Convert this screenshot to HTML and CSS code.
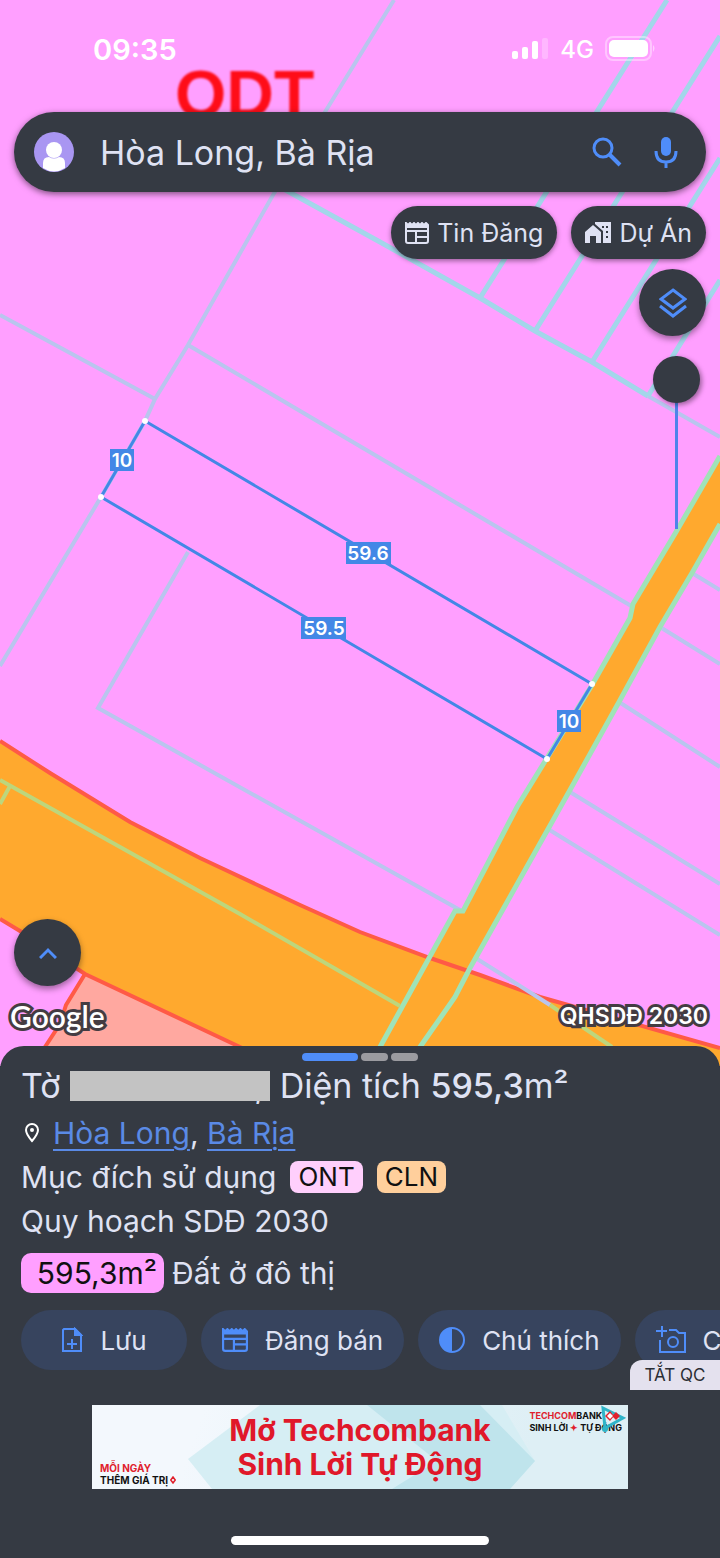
FILE: index.html
```html
<!DOCTYPE html>
<html lang="vi">
<head>
    <meta charset="UTF-8">
    <meta name="viewport" content="width=device-width, initial-scale=1.0">
    <title>Bản đồ quy hoạch</title>
    <link rel="stylesheet" href="styles.css">
</head>
<body>
    <main class="map">
        <svg class="map-canvas" viewBox="0 0 720 1070" preserveAspectRatio="xMidYMin slice" role="img" aria-label="Bản đồ thửa đất">
            <text class="zone-label" x="175" y="117">ODT</text>

            <!-- đường giao thông -->
            <g class="road">
                <path d="M0 741L50 773L130 822L200 858L300 905L360 932L430 958L480 975L540 997L720 1048V1070H290L240 1047L85 974L20 931L0 919Z"/>
                <path d="M720 456L676 532L633 604L630 618L592 685L547 758L517 807L463 911L455 911L380 1047V1070H408L470 968L570 790L660 627L720 524Z"/>
            </g>
            <path class="salmon" d="M85 975L66 1005L60 1024L45 1047V1070H290L240 1047Z"/>
            <g class="border">
                <path d="M0 741L50 773L130 822L200 858L300 905L360 932L430 958L480 975L540 997L720 1048"/>
                <path d="M0 919L20 931L85 974L240 1047L290 1070"/>
                <path d="M85 974L66 1005L60 1024L45 1047"/>
            </g>

            <!-- ranh thửa -->
            <g class="parcel">
                <path d="M394 0L325 112L273 195L188 345L155 399L145 421L101 497L0 666"/>
                <path d="M0 315L155 399"/>
                <path d="M188 345L633 607"/>
                <path d="M188 552L98 708L460 910"/>
                <path d="M648 396L720 437"/>
                <path d="M692 573L720 590M660 627L720 664M619 702L720 767M570 792L720 884M548 829L720 935M474 957L550 1005"/>
            </g>
            <g class="parcel teal">
                <path d="M280 187L380 242L480 298L535 331L592 362L648 396"/>
                <path d="M667 0L480 298M720 36L535 331M720 158L592 362M720 280L648 396"/>
            </g>
            <g class="parcel green">
                <path d="M720 456L676 532L633 604L630 618L592 685L547 758L517 807L463 911L455 911L380 1047L370 1066"/>
                <path d="M720 524L692 573L660 627L619 702L570 790L470 968L455 997L420 1047L408 1066"/>
            </g>
            <g class="parcel lime">
                <path d="M0 780L240 914L400 1006M10 786L0 804M550 1005L612 1047"/>
            </g>

            <!-- thửa đang chọn -->
            <path class="selected" d="M145 421L592 684L547 759L101 497Z"/>
            <g class="nodes">
                <circle cx="145" cy="421" r="3"/>
                <circle cx="592" cy="684" r="3"/>
                <circle cx="547" cy="759" r="3"/>
                <circle cx="101" cy="497" r="3"/>
            </g>
            <g class="measure">
                <rect x="110" y="449" width="24" height="22"/>
                <text x="122" y="467">10</text>
                <rect x="346" y="542" width="45" height="22"/>
                <text x="368" y="560">59.6</text>
                <rect x="301" y="617" width="45" height="22"/>
                <text x="324" y="635">59.5</text>
                <rect x="557" y="710" width="24" height="22"/>
                <text x="569" y="728">10</text>
            </g>
        </svg>

        <header class="status-bar">
            <time>09:35</time>
            <div class="status-icons">
                <svg width="38" height="22" viewBox="0 0 38 22" fill="#fff">
                    <rect x="1" y="13" width="6" height="8" rx="2"/>
                    <rect x="11" y="9" width="6" height="12" rx="2"/>
                    <rect x="21" y="3" width="6" height="18" rx="2"/>
                    <rect x="31" y="0" width="6" height="21" rx="2" opacity=".25"/>
                </svg>
                <span>4G</span>
                <svg width="52" height="26" viewBox="0 0 52 26" fill="#fff">
                    <rect x="1" y="1" width="45" height="23" rx="7" fill="none" stroke="#fff" stroke-width="2" opacity=".4"/>
                    <rect x="4" y="4" width="39" height="17" rx="5"/>
                    <path d="M48 9q3 3 0 7z" opacity=".5"/>
                </svg>
            </div>
        </header>

        <form class="search">
            <svg class="avatar" viewBox="0 0 40 40">
                <circle cx="20" cy="20" r="20" fill="#a996f2"/>
                <path d="M9 36V31Q9 25 15 25Q20 28 25 25Q31 25 31 31V36Q20 43 9 36Z" fill="#fff"/>
                <circle cx="20" cy="18" r="8" fill="#fff"/>
            </svg>
            <input type="text" value="Hòa Long, Bà Rịa" aria-label="Tìm kiếm">
            <button type="button" aria-label="Tìm">
                <svg width="30" height="30" viewBox="0 0 30 30" fill="none" stroke="#4f8df9">
                    <circle cx="11" cy="11" r="9" stroke-width="3"/>
                    <path d="M17 17L28 28" stroke-width="4"/>
                </svg>
            </button>
            <button type="button" aria-label="Giọng nói">
                <svg width="24" height="33" viewBox="0 0 24 33" fill="none" stroke="#4f8df9" stroke-width="3">
                    <rect x="7" y="1" width="10" height="19" rx="5" fill="#4f8df9" stroke="none"/>
                    <path d="M2 15Q2 26 12 26Q22 26 22 15M12 26V32"/>
                </svg>
            </button>
        </form>

        <nav class="filters">
            <button type="button">
                <svg width="24" height="22" viewBox="0 0 24 22" fill="none" stroke="#dfe2f3" stroke-width="2">
                    <path d="M1 1L3 3L5 1L7 3L9 1L11 3L13 1L15 3L17 1L19 3L21 1L23 3V19Q23 21 21 21H3Q1 21 1 19Z"/>
                    <path d="M1 5H23M1 9H23M11 10V21M11 15H23M1 3H23"/>
                </svg>
                Tin Đăng
            </button>
            <button type="button">
                <svg width="26" height="22" viewBox="0 0 26 22" fill="#dfe2f3">
                    <path d="M0 10L8 3L16 10V21H11V14H5V21H0Z"/>
                    <path fill-rule="evenodd" d="M10 0H26V21H18V9L10 2ZM17 4V6H19V4ZM21 4V6H23V4ZM21 9V11H23V9ZM21 14V16H23V14Z"/>
                </svg>
                Dự Án
            </button>
        </nav>

        <div class="tools">
            <button class="round" type="button" aria-label="Lớp bản đồ">
                <svg width="28" height="30" viewBox="0 0 28 30" fill="none" stroke="#4f8df9" stroke-width="3">
                    <path d="M14 2L26 11L14 20L2 11Z"/>
                    <path d="M1 18L14 28L27 18"/>
                </svg>
            </button>
            <input class="opacity" type="range" min="0" max="100" value="0" aria-label="Độ mờ lớp quy hoạch">
        </div>

        <div class="map-bottom">
            <button class="round" type="button" aria-label="Mở rộng">
                <svg width="18" height="12" viewBox="0 0 18 12" fill="none" stroke="#4f8df9" stroke-width="3">
                    <path d="M1 11L9 3L17 11"/>
                </svg>
            </button>
            <div class="credits">
                <span class="google">Google</span>
                <span class="plan">QHSDĐ 2030</span>
            </div>
        </div>
    </main>

    <section class="sheet">
        <div class="pager"><i class="active"></i><i></i><i></i></div>

        <div class="details">
            <h1>Tờ <span class="redacted">,</span> Diện tích <b>595,3</b>m²</h1>
            <p class="place">
                <svg width="14" height="20" viewBox="0 0 14 20" fill="none" stroke="#fff" stroke-width="2">
                    <path d="M7 18Q1 11 1 7A6 6 0 0 1 13 7Q13 11 7 18Z"/>
                    <circle cx="7" cy="7" r="2" fill="#fff" stroke="none"/>
                </svg>
                <span><a href="#hoa-long">Hòa Long</a>, <a href="#ba-ria">Bà Rịa</a></span>
            </p>
            <p class="purpose">Mục đích sử dụng <span class="tag ont">ONT</span><span class="tag cln">CLN</span></p>
            <p class="planning">Quy hoạch SDĐ 2030</p>
            <p class="land"><span class="area">595,3m²</span> Đất ở đô thị</p>
        </div>

        <div class="actions">
            <button type="button">
                <svg width="22" height="26" viewBox="0 0 22 26" fill="none" stroke="#4f8df9" stroke-width="2">
                    <path d="M3 2H14L20 8V24H2V3Z"/>
                    <path d="M14 2V8H20Z" fill="#4f8df9"/>
                    <path d="M11 12V22M6 17H16"/>
                </svg>
                Lưu
            </button>
            <button type="button">
                <svg width="26" height="24" viewBox="0 0 24 22" fill="none" stroke="#4f8df9" stroke-width="2">
                    <path d="M1 1L3 3L5 1L7 3L9 1L11 3L13 1L15 3L17 1L19 3L21 1L23 3V19Q23 21 21 21H3Q1 21 1 19Z"/>
                    <path d="M1 5H23M1 10H23M11 10V21M11 15H23M1 3H23"/>
                </svg>
                Đăng bán
            </button>
            <button type="button">
                <svg width="26" height="26" viewBox="0 0 26 26">
                    <circle cx="13" cy="13" r="12" fill="none" stroke="#4f8df9" stroke-width="2"/>
                    <path d="M13 1A12 12 0 0 0 13 25Z" fill="#4f8df9"/>
                </svg>
                Chú thích
            </button>
            <button type="button">
                <svg width="30" height="28" viewBox="0 0 30 28" fill="none" stroke="#4f8df9" stroke-width="2">
                    <path d="M6 0V11M0 5H11"/>
                    <path d="M13 4H20L23 7H29V26H4V14"/>
                    <circle cx="17" cy="16" r="5"/>
                </svg>
                Chụp ảnh
            </button>
        </div>
        <button class="ad-off" type="button">TẮT QC</button>

        <a class="ad" href="#ad">
            <svg class="ad-back" viewBox="0 0 536 84" preserveAspectRatio="none">
                <path d="M96 54L168 0H410L443 56L418 84H120Z" fill="#d6eef4"/>
                <path d="M275 0H388L443 56L418 84H300L345 56Z" fill="#bfe4ec"/>
            </svg>
            <span class="ad-slogan"><em>MỖI NGÀY</em>THÊM GIÁ TRỊ
                <svg width="6" height="8" viewBox="0 0 8 10" fill="none" stroke="#e0202c" stroke-width="2"><path d="M4 1L7 5L4 9L1 5Z"/></svg>
            </span>
            <strong>Mở Techcombank<br>Sinh Lời Tự Động</strong>
            <span class="ad-brand"><em>TECHCOM</em>BANK<br>SINH LỜI <em>✦</em> TỰ ĐỘNG</span>
            <svg class="ad-mark" width="26" height="28" viewBox="0 0 26 28">
                <path d="M3 3L23 13L5 23Z" fill="none" stroke="#2fb4c8" stroke-width="3"/>
                <path d="M5 11L10 6L14 11L10 16ZM12 11L16 7L20 11L16 15Z" fill="#e0202c"/>
                <path d="M10 8L13 11L10 14L7 11Z" fill="#fff"/>
                <circle cx="5" cy="24" r="3" fill="#2fb4c8"/>
            </svg>
        </a>

        <div class="home-bar"></div>
    </section>
</body>
</html>
```
FILE: styles.css
```css
* {
    box-sizing: border-box;
}

body {
    margin: 0;
    min-height: 100vh;
    display: flex;
    flex-direction: column;
    overflow-x: hidden;
    font-family: Inter, "Noto Sans", sans-serif;
    background-color: #353a43;
    color: #dfe2f3;
}

button, input {
    font-family: inherit;
    color: inherit;
    border: none;
    background: none;
    padding: 0;
    margin: 0;
}

button {
    cursor: pointer;
}

svg {
    flex: none;
}

h1, p {
    margin: 0;
}

/* Bản đồ */
.map {
    position: relative;
    flex: 1;
    display: flex;
    flex-direction: column;
    padding: 0 14px 32px;
    background-color: #ff9fff;
}

.map > * {
    position: relative;
}

.map .map-canvas {
    position: absolute;
    top: 0;
    left: 0;
    width: 100%;
    height: 100%;
}

.zone-label {
    font: bold 66px "Liberation Sans", sans-serif;
    fill: #ff0d18;
    filter: blur(1px);
}

.road {
    fill: #ffa92e;
}

.salmon {
    fill: #ffa8a0;
}

.border {
    fill: none;
    stroke: #ff5a46;
    stroke-width: 4;
}

.parcel {
    fill: none;
    stroke: #b9c5ee;
    stroke-width: 4;
}

.teal {
    stroke: #a3d6ea;
    stroke-width: 5;
}

.green {
    stroke: #9fe3b8;
    stroke-width: 5;
}

.lime {
    stroke: #bdd67c;
}

.selected {
    fill: none;
    stroke: #4387e6;
    stroke-width: 3;
}

.nodes {
    fill: #fff;
}

.measure rect {
    fill: #4387e6;
}

.measure text {
    fill: #fff;
    font-size: 19px;
    font-weight: 600;
    text-anchor: middle;
}

.status-bar {
    display: flex;
    justify-content: space-between;
    align-items: center;
    height: 98px;
    padding: 0 49px 0 79px;
    margin-bottom: 14px;
    color: #fff;
    font-size: 29px;
    font-weight: 600;
}

.status-icons {
    display: flex;
    align-items: center;
    gap: 11px;
    font-size: 24px;
    font-weight: 500;
}

.search {
    display: flex;
    align-items: center;
    height: 80px;
    padding: 0 28px 0 20px;
    border-radius: 40px;
    background-color: #353a43;
    box-shadow: 0 2px 6px rgba(0, 0, 0, 0.5);
}

.search input {
    flex: 1;
    min-width: 0;
    margin-left: 26px;
    font-size: 34px;
    outline: none;
}

.search button {
    margin-left: 32px;
}

.search svg {
    display: block;
}

.avatar {
    width: 40px;
    height: 40px;
}

.filters {
    display: flex;
    justify-content: flex-end;
    gap: 14px;
    margin-top: 14px;
}

.filters button {
    display: flex;
    align-items: center;
    gap: 8px;
    height: 53px;
    padding: 0 14px;
    border-radius: 27px;
    background-color: #353a43;
    box-shadow: 0 2px 5px rgba(0, 0, 0, 0.4);
    font-size: 25px;
}

.tools {
    display: flex;
    flex-direction: column;
    align-items: flex-end;
    gap: 20px;
    margin-top: 10px;
}

.round {
    display: flex;
    align-items: center;
    justify-content: center;
    width: 67px;
    height: 67px;
    border-radius: 50%;
    background-color: #353a43;
    box-shadow: 0 3px 6px rgba(0, 0, 0, 0.4);
}

.opacity {
    appearance: none;
    writing-mode: vertical-lr;
    width: 47px;
    height: 173px;
    margin-right: 6px;
}

.opacity::-webkit-slider-runnable-track {
    width: 3px;
    height: 100%;
    background-color: #4f82ea;
}

.opacity::-webkit-slider-thumb {
    appearance: none;
    width: 47px;
    height: 47px;
    margin-left: -22px;
    border-radius: 50%;
    background-color: #353a43;
    box-shadow: 2px 2px 5px rgba(0, 0, 0, 0.4);
}

.map-bottom {
    margin-top: auto;
}

.credits {
    display: flex;
    justify-content: space-between;
    align-items: center;
    height: 36px;
    margin: 12px -2px 0 -4px;
    color: #fff;
    -webkit-text-stroke: 6px #443c42;
    paint-order: stroke fill;
}

.google {
    font-family: Lato, sans-serif;
    font-size: 30px;
    font-weight: 600;
}

.plan {
    font-size: 23px;
    font-weight: 600;
}

/* Thông tin thửa đất */
.sheet {
    position: relative;
    margin-top: -20px;
    padding: 7px 0 13px;
    border-radius: 24px 24px 0 0;
    background-color: #353a43;
    font-size: 30px;
    overflow: hidden;
}

.pager {
    display: flex;
    justify-content: center;
    gap: 3px;
    height: 8px;
}

.pager i {
    width: 27px;
    border-radius: 4px;
    background-color: #9b9ba0;
}

.pager .active {
    width: 56px;
    background-color: #4f8df9;
}

.details {
    padding-left: 21px;
}

.sheet h1 {
    height: 50px;
    font-size: 34px;
    font-weight: 400;
    line-height: 50px;
    white-space: nowrap;
}

.sheet h1 b {
    font-weight: 500;
}

.redacted {
    position: relative;
    display: inline-block;
    width: 200px;
    padding-right: 6px;
    text-align: right;
}

.redacted::after {
    content: "";
    position: absolute;
    inset: 10px 0;
    background-color: #c3c3c3;
}

.place, .purpose, .planning, .land {
    display: flex;
    align-items: center;
    height: 44px;
    white-space: nowrap;
}

.place {
    gap: 14px;
    padding-left: 4px;
}

.place a {
    color: #5a8ae6;
    text-decoration-thickness: 2px;
    text-underline-offset: 5px;
}

.tag {
    height: 32px;
    margin-left: 14px;
    padding: 0 8px;
    border-radius: 8px;
    color: #111;
    font-size: 26px;
    line-height: 32px;
}

.ont {
    background-color: #ffcffc;
}

.cln {
    background-color: #ffcf9c;
}

.land {
    gap: 8px;
    height: 40px;
    margin-top: 10px;
}

.area {
    width: 143px;
    padding-right: 7px;
    border-radius: 10px;
    background-color: #ff9fff;
    color: #111;
    text-align: right;
    line-height: 40px;
}

.actions {
    display: flex;
    gap: 14px;
    margin-top: 17px;
    padding-left: 21px;
    overflow: hidden;
}

.actions button {
    display: flex;
    flex: none;
    align-items: center;
    justify-content: center;
    gap: 17px;
    min-width: 166px;
    height: 60px;
    padding: 0 21px;
    border-radius: 30px;
    background-color: #37445e;
    font-size: 26px;
}

.ad-off {
    position: relative;
    display: block;
    width: 90px;
    height: 30px;
    margin: -10px 0 0 auto;
    border-radius: 12px 0 0 0;
    background-color: #e4e1ee;
    color: #2b2e35;
    font-size: 17px;
}

.ad {
    position: relative;
    display: flex;
    align-items: center;
    justify-content: center;
    width: 536px;
    max-width: 100%;
    height: 84px;
    margin: 15px auto 0;
    background: linear-gradient(110deg, #f3f8fd 20%, #deeff5 80%);
    color: #111;
    text-decoration: none;
}

.ad-back {
    position: absolute;
    width: 100%;
    height: 100%;
}

.ad strong {
    position: relative;
    color: #e0182a;
    font-size: 30px;
    line-height: 34px;
    text-align: center;
}

.ad em {
    color: #e0202c;
    font-style: normal;
}

.ad-slogan, .ad-brand {
    position: absolute;
    font-size: 10px;
    font-weight: 700;
    line-height: 12px;
}

.ad-slogan {
    left: 8px;
    bottom: 3px;
}

.ad-slogan em {
    display: block;
}

.ad-brand {
    top: 5px;
    right: 6px;
    font-size: 9px;
}

.ad-mark {
    position: absolute;
    top: 0;
    right: 2px;
}

.home-bar {
    width: 258px;
    height: 9px;
    margin: 47px auto 0;
    border-radius: 5px;
    background-color: #fff;
}
```
